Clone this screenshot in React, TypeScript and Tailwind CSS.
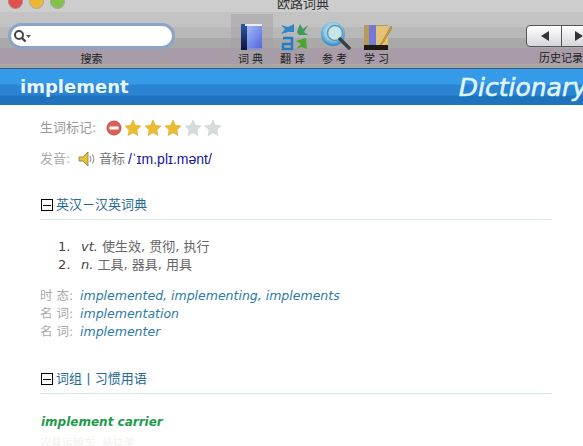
import React from 'react';

const cjk = "font-['DejaVu_Sans','Noto_Sans_CJK_SC',sans-serif]";

const BookIcon = () => (
  <svg width="22" height="28" viewBox="0 0 22 28">
    <defs>
      <linearGradient id="bk" x1="0" y1="0" x2="1" y2="1">
        <stop offset="0" stopColor="#b4ccf8" />
        <stop offset="1" stopColor="#4f62e0" />
      </linearGradient>
      <linearGradient id="sp" x1="0" y1="0" x2="0" y2="1">
        <stop offset="0" stopColor="#2b5aa8" />
        <stop offset="1" stopColor="#0c1438" />
      </linearGradient>
    </defs>
    <rect x="0" y="1" width="21" height="26" fill="url(#bk)" />
    <rect x="0" y="1" width="6" height="26" fill="url(#sp)" />
    <rect x="4" y="1" width="17" height="2" fill="#e8eefc" />
    <rect x="6" y="25" width="15" height="2" fill="#8a90c8" />
  </svg>
);

const TranslateIcon = () => (
  <svg width="30" height="28" viewBox="0 0 30 28">
    <path d="M2 2 L9 4 L15 1 V9 H9 L2 11 L6 6 Z" fill="#2f86c8" />
    <path d="M18 9 L21 1 L24 6 L29 2 L25 9 L29 12 H20 Z" fill="#3d9a5a" />
    <path d="M4 15 H13 V26 H4 V21 H12" fill="none" stroke="#1f7fc4" strokeWidth="2.4" />
    <path d="M17 18 L27 15 L28 26 L22 24 L17 26 L22 21 Z" fill="#4aa52e" />
  </svg>
);

const SearchIcon = () => (
  <svg width="32" height="30" viewBox="0 0 32 30">
    <defs>
      <radialGradient id="gl" cx="0.5" cy="0.4" r="0.6">
        <stop offset="0" stopColor="#d8f1f5" />
        <stop offset="0.6" stopColor="#8fcbe8" />
        <stop offset="1" stopColor="#2b83cc" />
      </radialGradient>
    </defs>
    <circle cx="13" cy="13" r="12" fill="url(#gl)" />
    <circle cx="15" cy="12" r="7.5" fill="#c6e6ea" stroke="#6d94a8" strokeWidth="1.5" />
    <path d="M20 18 L29 27" stroke="#3b3f46" strokeWidth="3.5" strokeLinecap="round" />
  </svg>
);

const StudyIcon = () => (
  <svg width="28" height="27" viewBox="0 0 28 27">
    <rect x="0" y="1" width="24" height="24" fill="#b8995c" />
    <rect x="5" y="1" width="7" height="20" fill="#7478d6" />
    <path d="M12 2 H24 V21 H12 Z" fill="#e3c277" />
    <path d="M27 2 L18 18 L16 21 L19 19 L28 4 Z" fill="#d6a23a" stroke="#8c6a25" strokeWidth="0.5" />
    <rect x="0" y="21" width="24" height="5" fill="#1d1a12" />
  </svg>
);

const Star = ({ on }: { on: boolean }) => (
  <svg width="18" height="18" viewBox="0 0 18 18">
    <path
      d="M9 1 L11.4 6.3 L17 7 L12.9 10.9 L14 16.6 L9 13.8 L4 16.6 L5.1 10.9 L1 7 L6.6 6.3 Z"
      fill={on ? '#e9bd2f' : '#d5dcdc'}
      stroke={on ? '#d9a832' : '#c9d2d0'}
      strokeWidth="0.6"
    />
  </svg>
);

const MinusBox = () => (
  <span className="ml-[1px] flex w-[12px] h-[12px] items-center justify-center border border-black bg-white shrink-0">
    <span className="block w-[8px] h-px bg-black" />
  </span>
);

const ToolItem = ({ label, active, children }: { label: string; active?: boolean; children: React.ReactNode }) => (
  <div className={`flex w-[42px] flex-col items-center ${active ? 'bg-[#a5a0a5]/50' : ''}`}>
    <div className="flex h-[38px] items-end justify-center pb-[1px]">{children}</div>
    <div className={`h-[16px] text-[11px] leading-[16px] tracking-[3px] text-[#222] whitespace-nowrap ${cjk}`}>{label}</div>
  </div>
);

const App: React.FC = () => {
  return (
    <div className={`w-[583px] h-[446px] overflow-hidden bg-white ${cjk}`}>
      {/* Toolbar */}
      <div className="relative h-[69px] bg-[linear-gradient(#cdcdcd_0,#cdcdcd_12px,#c3c3c3_12px,#c3c3c3_27px,#b8b8b8_27px,#b8b8b8_38px,#a9a9a9_38px,#a9a9a9_48px,#a79ca7_48px,#a79ca7_64px,#b8a99c_64px,#b8a99c_65px,#a6a6a6_65px,#a6a6a6_68px,#3a5a80_68px)]">
        <div className="absolute left-[8px] -top-[6px] flex gap-[6px]">
          <span className="w-[15px] h-[15px] rounded-full bg-[#e0514d] border border-[#a88]" />
          <span className="w-[15px] h-[15px] rounded-full bg-[#eeb733] border border-[#aa9]" />
          <span className="w-[15px] h-[15px] rounded-full bg-[#86c14c] border border-[#9a9]" />
        </div>
        <div className="absolute left-[277px] -top-[4px] text-[13px] leading-[15px] text-[#333]">欧路词典</div>

        <div className="flex h-full pt-[14px]">
          {/* Search */}
          <div className="ml-[8px] w-[168px] flex flex-col items-center">
            <div className="mt-[9px] flex h-[26px] w-[167px] items-center rounded-full border-[3px] border-[#8ba3c8] bg-white pl-[2px]">
              <svg width="18" height="14" viewBox="0 0 18 14">
                <circle cx="6" cy="6" r="4" fill="none" stroke="#444" strokeWidth="2" />
                <path d="M9 9 L12.5 12.5" stroke="#444" strokeWidth="2.4" />
                <path d="M13 6 H18 L15.5 9 Z" fill="#555" />
              </svg>
            </div>
            <div className="mt-[4px] text-[11px] leading-[14px] text-[#222]">搜索</div>
          </div>

          {/* Tool buttons */}
          <div className="ml-[56px] flex h-[54px]">
            <ToolItem label="词典" active><BookIcon /></ToolItem>
            <ToolItem label="翻译"><TranslateIcon /></ToolItem>
            <ToolItem label="参考"><SearchIcon /></ToolItem>
            <ToolItem label="学习"><StudyIcon /></ToolItem>
          </div>

          {/* History */}
          <div className="ml-[127px] flex flex-col items-start">
            <div className="mt-[11px] flex h-[22px] w-[72px] shrink-0 rounded-[4px] border border-[#555] bg-[linear-gradient(#ffffff,#d6d4da)]">
              <div className="flex w-[36px] items-center justify-center border-r border-[#555] pl-[2px]">
                <span className="w-0 h-0 border-y-[5px] border-y-transparent border-r-[8px] border-r-[#333]" />
              </div>
              <div className="flex w-[36px] items-center pl-[13px]">
                <span className="w-0 h-0 border-y-[5px] border-y-transparent border-l-[8px] border-l-[#333]" />
              </div>
            </div>
            <div className="mt-[5px] ml-[13px] text-[11px] leading-[14px] whitespace-nowrap text-[#222]">历史记录</div>
          </div>
        </div>
      </div>

      {/* Word banner */}
      <div className="flex h-[36px] items-center justify-between overflow-hidden bg-[linear-gradient(#359ae8_0,#359ae8_15px,#2b84d2_16px,#2b84d2_26px,#1f72bd_27px,#1f72bd_36px)] pl-[20px]">
        <span className="text-[18px] font-bold leading-none text-[#e8f6fc]">implement</span>
        <span className="shrink-0 -mr-[4px] italic text-[25px] leading-none text-[#dff5fb] [-webkit-text-stroke:0.6px_#dff5fb]">Dictionary</span>
      </div>

      {/* Entry */}
      <div className="pl-[40px] pr-[31px]">
        <div className="mt-[13px] flex h-[20px] items-center text-[#999]">
          <span className="w-[66px] text-[13px] whitespace-nowrap">生词标记:</span>
          <svg width="16" height="16" viewBox="0 0 16 16">
            <circle cx="8" cy="8" r="7" fill="#dd5f55" stroke="#b9544d" />
            <rect x="3.5" y="6.5" width="9" height="3" fill="#fff" />
          </svg>
          <span className="ml-[2px] flex gap-[2px]">
            <Star on /><Star on /><Star on /><Star on={false} /><Star on={false} />
          </span>
        </div>

        <div className="mt-[11px] flex h-[20px] items-center">
          <span className="w-[38px] text-[13px] whitespace-nowrap text-[#aaa]">发音:</span>
          <svg width="20" height="16" viewBox="0 0 20 16">
            <path d="M1 6 H5 L10 1 V15 L5 10 H1 Z" fill="#edc13c" stroke="#8b7436" strokeWidth="0.8" />
            <path d="M12 5 Q14 8 12 11 M14.5 3.5 Q17.5 8 14.5 12.5" fill="none" stroke="#777" strokeWidth="0.9" />
          </svg>
          <span className="ml-[1px] text-[13px] text-[#777]">音标</span>
          <span className="ml-[3px] text-[14px] text-[#16169b] font-['Liberation_Sans','Noto_Sans',sans-serif]">/ˈɪm.plɪ.mənt/</span>
        </div>

        <div className="mt-[27px] flex h-[18px] items-center gap-[3px] text-[13px] text-[#1f6a96]">
          <MinusBox />
          <span>英汉－汉英词典</span>
        </div>
        <div className="mt-[5px] h-px bg-[#d3ecdb]" />

        <ol className="mt-[18px] pl-[18px] text-[13px] leading-[18px] text-[#666]">
          <li className="flex">
            <span className="w-[23px] text-[#444]">1.</span>
            <span><i className="text-[#444]">vt.</i> 使生效, 贯彻, 执行</span>
          </li>
          <li className="flex">
            <span className="w-[23px] text-[#444]">2.</span>
            <span><i className="text-[#444]">n.</i> 工具, 器具, 用具</span>
          </li>
        </ol>

        <div className="mt-[13px] text-[12.5px] leading-[18px] text-[#2b7aa8] italic">
          <div className="flex">
            <span className="w-[40px] not-italic text-[12.5px] text-[#aaa]">时 态:</span>
            <span>implemented, implementing, implements</span>
          </div>
          <div className="flex">
            <span className="w-[40px] not-italic text-[12.5px] text-[#aaa]">名 词:</span>
            <span>implementation</span>
          </div>
          <div className="flex">
            <span className="w-[40px] not-italic text-[12.5px] text-[#aaa]">名 词:</span>
            <span>implementer</span>
          </div>
        </div>

        <div className="mt-[29px] flex h-[18px] items-center gap-[3px] text-[13px] text-[#1f6a96]">
          <MinusBox />
          <span>词组 | 习惯用语</span>
        </div>
        <div className="mt-[5px] h-px bg-[#d3ecdb]" />

        <div className="mt-[19px] pl-[1px] text-[12px] font-bold italic leading-[18px] text-[#1f9a4c]">implement carrier</div>
        <div className="mt-[6px] text-[11px] leading-[14px] text-[#f2f2ee]">农具运输车, 悬挂架</div>
      </div>
    </div>
  );
};

export default App;
